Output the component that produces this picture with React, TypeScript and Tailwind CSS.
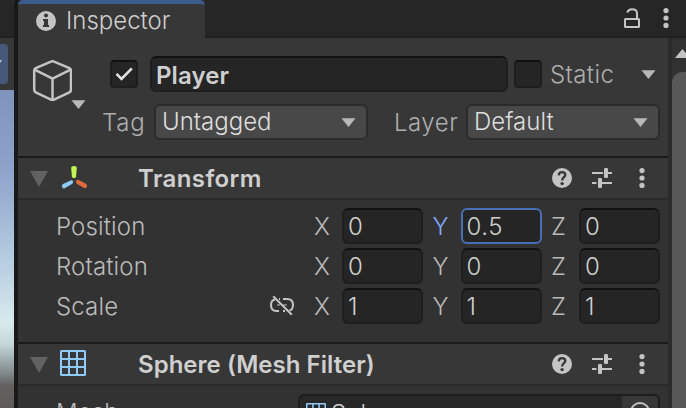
import { ReactNode } from "react";

function Caret({ className = "" }: { className?: string }) {
  return (
    <svg className={`h-[9px] w-[15px] shrink-0 ${className}`} viewBox="0 0 15 9" fill="#b8b8b8">
      <path d="M0.5 0.2H14.5L7.5 9Z" />
    </svg>
  );
}

function Kebab() {
  return (
    <svg className="h-5 w-[6px] shrink-0" viewBox="0 0 6 20" fill="#c4c4c4">
      <circle cx="3" cy="2.6" r="2.6" />
      <circle cx="3" cy="10" r="2.6" />
      <circle cx="3" cy="17.4" r="2.6" />
    </svg>
  );
}

function GridIcon({ className = "" }: { className?: string }) {
  return (
    <svg className={`shrink-0 ${className}`} viewBox="0 0 26 26" fill="none" stroke="#8fcbfa" strokeWidth="2">
      <rect x="1" y="1" width="24" height="24" rx="0.6" />
      <path d="M9 1V25M17 1V25M1 9H25M1 17H25" />
    </svg>
  );
}

function AxesIcon() {
  return (
    <svg className="h-[24px] w-[28px] shrink-0" viewBox="0 0 28 24">
      <path d="M11.2 2Q11.2 0 14 0Q16.8 0 16.8 2L16.1 10.5Q15.8 12.2 14 12.2Q12.2 12.2 11.9 10.5Z" fill="#c0f750" />
      <path d="M11.2 14.3Q12.6 14 13 15.5Q13.2 17 12 18L5.2 22.1Q3.3 23 2.2 21.2Q1.2 19 3 18Z" fill="#8fcbfa" />
      <path d="M17.5 13.8Q16 14.4 16 16Q16.1 17.2 17.2 17.9L24 22Q26 22.8 26.8 21Q27.6 18.8 26 17.8L18.7 14Z" fill="#e06a3a" />
    </svg>
  );
}

function Separator({ className }: { className: string }) {
  return <div className={`h-[2px] shrink-0 ${className}`} />;
}

function ComponentHeader({ icon, title, spacing }: { icon: ReactNode; title: string; spacing: string }) {
  return (
    <div className="flex h-10 shrink-0 items-center bg-[#373737] pr-[23px] pl-3">
      <svg className="mt-[2px] h-4 w-[18px] shrink-0" viewBox="0 0 18 16" fill="#626262">
        <path d="M0 0H18L9 16Z" />
      </svg>
      <div className="ml-3 flex w-[78px] justify-start">{icon}</div>
      <div className={`flex-1 pt-[2px] text-[24px] leading-6 font-semibold text-[#cfcfcf] ${spacing}`}>{title}</div>
      <svg className="h-5 w-5" viewBox="0 0 20 20">
        <circle cx="10" cy="10" r="10" fill="#c4c4c4" />
        <path d="M6.7 7.4C6.9 5.2 8.1 4.2 10 4.2C12 4.2 13.3 5.3 13.3 7C13.3 9.2 10.1 9.3 10.1 12.5" fill="none" stroke="#373737" strokeWidth="2.3" />
        <circle cx="10.1" cy="15.6" r="1.7" fill="#373737" />
      </svg>
      <svg className="mr-[27px] ml-5 h-5 w-5" viewBox="0 0 20 20" fill="#c4c4c4">
        <path d="M0 4H11V6H0ZM16 4H20V6H16ZM0 14H4.5V16H0ZM10 14H20V16H10Z" />
        <rect x="12" y="0" width="4" height="10" rx="1.2" />
        <rect x="6" y="10" width="4" height="10" rx="1.2" />
      </svg>
      <Kebab />
    </div>
  );
}

function Field({ axis, value, active = false }: { axis: string; value: string; active?: boolean }) {
  return (
    <div className="flex items-center">
      <span className={`w-[28px] pt-[2px] ${active ? "text-[#86aaff]" : "text-[#bababa]"}`}>{axis}</span>
      <div
        className={`flex h-9 w-[81px] items-center rounded-[6px] border-2 bg-[#252525] pt-[2px] pl-[4px] tracking-[0.5px] text-[#d0d0d0] ${
          active ? "border-[#4770b5]" : "border-[#1e1e1e] border-t-[#111111]"
        }`}
      >
        {value}
      </div>
    </div>
  );
}

function VectorRow({ label, values, active, link }: { label: string; values: string[]; active?: number; link?: boolean }) {
  return (
    <div className="flex h-9 items-center">
      <span className="w-[213px] pt-[2px] tracking-[0.15px] text-[#bababa]">{label}</span>
      <div className="w-[45px]">
        {link && (
          <svg className="h-5 w-[26px]" viewBox="0 0 26 20" fill="none" stroke="#c4c4c4" strokeWidth="2">
            <path d="M6 3.4C2.6 4 2 6 2 9C2 12.8 3.8 15 7.4 15H10M10 3H11M14 3H18C22 3 24 5 24 9C24 12 23 13.8 20.5 14.6M14 15H16" />
            <path d="M8 9H11M14 9H18" opacity="0.5" />
            <path d="M4.2 0.2L22.8 18.7" />
          </svg>
        )}
      </div>
      <div className="flex gap-[9.5px]">
        {["X", "Y", "Z"].map((axis, i) => (
          <Field key={axis} axis={axis} value={values[i]} active={active === i} />
        ))}
      </div>
    </div>
  );
}

function Select({ value, className }: { value: string; className: string }) {
  return (
    <div className={`flex h-9 items-center justify-between rounded-[6px] border-2 border-[#2b2b2b] bg-[#484848] pr-[10px] pl-[6px] text-[#dedede] ${className}`}>
      <span>{value}</span>
      <Caret />
    </div>
  );
}

function ObjectHeader() {
  return (
    <div className="flex h-[118px] shrink-0 bg-[#373737] pt-[18px] pl-[14px]">
      <div className="flex w-[54px] pt-[4px]">
        <svg className="h-[41px] w-10 shrink-0" viewBox="0 0 40 41" fill="none" stroke="#c4c4c4" strokeWidth="2.5" strokeLinejoin="round">
          <path d="M19 1.6Q20.5 0.8 22 1.6L37.4 8.2Q39 9 39 10.8V29.5Q39 31.5 37.4 32.4L22 39.7Q20.5 40.4 19 39.7L3.7 32.4Q2.2 31.5 2.2 29.5V10.8Q2.2 9 3.7 8.2Z" />
          <path d="M2.6 9.7L20.5 18.7L38.6 9.7M20.5 18.7V40" />
        </svg>
        <Caret className="mt-[40px] -ml-[1px]" />
      </div>
      <div className="flex flex-1 flex-col gap-3">
        <div className="flex h-9 items-center pl-6">
          <div className="flex h-7 w-7 items-center justify-center rounded-[4px] border-2 border-[#1e1e1e] border-t-[#111111] bg-[#252525]">
            <svg className="h-[14px] w-[18px]" viewBox="0 0 18 14" fill="none" stroke="#e2e2e2" strokeWidth="2.6">
              <path d="M1.5 6.8L6.5 11.8L16.8 1.4" />
            </svg>
          </div>
          <div className="ml-3 flex h-9 w-[358px] items-center rounded-[6px] border-2 border-[#1e1e1e] border-t-[#111111] bg-[#252525] pt-[3px] pl-[4px] font-semibold tracking-[0.1px] text-[#cfcfcf]">
            Player
          </div>
          <div className="ml-[6px] h-7 w-7 rounded-[4px] border-2 border-[#1e1e1e] border-t-[#111111] bg-[#252525]" />
          <span className="ml-2 w-[91px] pt-[2px] tracking-[0.4px] text-[#aeaeae]">Static</span>
          <Caret />
        </div>
        <div className="flex h-9 items-center pl-[16px]">
          <span className="w-[52px] pt-[2px] tracking-[0.8px] text-[#aeaeae]">Tag</span>
          <Select value="Untagged" className="w-[214px]" />
          <span className="ml-[26px] w-[72px] pt-[2px] tracking-[0.5px] text-[#aeaeae]">Layer</span>
          <Select value="Default" className="w-[194px]" />
        </div>
      </div>
    </div>
  );
}

function SceneEdge() {
  return (
    <div className="flex w-[14px] shrink-0 flex-col bg-[#373737]">
      <div className="h-[38px] shrink-0 rounded-tr-[4px] border-b-2 border-[#202020] bg-[#262626]" />
      <div className="mt-[6px] mb-[6px] h-10 w-2 shrink-0 overflow-hidden rounded-r-[4px] bg-[#46597a]">
        <svg className="mt-[16px] h-[3px] w-[2px]" viewBox="0 0 2 3" fill="#c4c4c4"><path d="M0 0H2L0 3Z" /></svg>
      </div>
      <div className="flex-1 bg-[linear-gradient(180deg,#8093bd_0%,#8da3ca_25%,#bdd3e4_58%,#d8eaed_73%,#c4d6d8_80%,#818a8c_89%,#626060_93%,#605b59_100%)]" />
    </div>
  );
}

function TabBar() {
  return (
    <div className="flex h-[38px] shrink-0 bg-[#262626]">
      <div className="flex w-[187px] items-center overflow-hidden rounded-t-[5px] border-t-4 border-[#3a5b8e] bg-[#373737] pl-[18px]">
        <svg className="-mt-px h-5 w-5" viewBox="0 0 20 20">
          <circle cx="10" cy="10" r="10" fill="#c4c4c4" />
          <circle cx="10" cy="4.4" r="2" fill="#373737" />
          <path d="M7 8H12V14H13V16H7V14H8V10H7Z" fill="#373737" />
        </svg>
        <span className="ml-[10px] text-[#cecece]">Inspector</span>
      </div>
      <div className="flex flex-1 items-center justify-end border-b-2 border-[#202020] pr-[17px]">
        <svg className="mr-[23px] h-5 w-4" viewBox="0 0 16 20" fill="none" stroke="#c4c4c4" strokeWidth="2">
          <rect x="1" y="11" width="14" height="8" rx="0.5" />
          <path d="M3.2 4.5Q4.2 1.2 8 1.2Q13 1.2 13 5.5V11" />
        </svg>
        <Kebab />
      </div>
    </div>
  );
}

export default function App() {
  return (
    <div className="flex h-[408px] w-[686px] overflow-hidden bg-[#191919] font-[Inter,sans-serif] text-[24px] leading-6 font-[350] whitespace-nowrap">
      <SceneEdge />
      <div className="ml-1 flex w-[668px] shrink-0 flex-col">
        <TabBar />
        <div className="flex min-h-0 flex-1">
          <div className="flex w-[650px] shrink-0 flex-col overflow-hidden bg-[#323232]">
            <ObjectHeader />
            <Separator className="bg-[#1a1a1a]" />
            <ComponentHeader icon={<AxesIcon />} title="Transform" spacing="tracking-[0.4px]" />
            <Separator className="bg-[#2b2b2b]" />
            <div className="flex h-[142px] shrink-0 flex-col gap-1 pt-2 pl-[38px]">
              <VectorRow label="Position" values={["0", "0.5", "0"]} active={1} />
              <VectorRow label="Rotation" values={["0", "0", "0"]} />
              <VectorRow label="Scale" values={["1", "1", "1"]} link />
            </div>
            <Separator className="bg-[#1a1a1a]" />
            <ComponentHeader icon={<GridIcon className="-mt-[2px] h-[26px] w-[26px]" />} title="Sphere (Mesh Filter)" spacing="tracking-[0.03px]" />
            <Separator className="bg-[#2b2b2b]" />
            <div className="flex h-[54px] shrink-0 pt-2 pl-[38px]">
              <span className="w-[242px] pt-[7px] tracking-[0.15px] text-[#bababa]">Mesh</span>
              <div className="flex h-9 w-[362px] overflow-hidden rounded-[6px] border-2 border-[#1e1e1e] bg-[#272727]">
                <GridIcon className="mt-[7px] ml-[6px] h-5 w-5" />
                <span className="ml-[5px] flex-1 pt-[6px] text-[#cecece]">Sphere</span>
                <div className="flex w-9 justify-center bg-[#373737] pt-[6px]">
                  <svg className="h-5 w-5" viewBox="0 0 20 20" fill="none" stroke="#c4c4c4" strokeWidth="2">
                    <circle cx="10" cy="10" r="9" />
                    <circle cx="10" cy="10" r="3" fill="#c4c4c4" />
                  </svg>
                </div>
              </div>
            </div>
          </div>
          <div className="flex w-[18px] shrink-0 flex-col overflow-hidden border-l-4 border-[#2b2b2b] bg-[#313131]">
            <svg className="mt-[11px] ml-[3px] h-[9px] w-[15px] shrink-0" viewBox="0 0 15 9" fill="#c4c4c4"><path d="M0 9H15L7.5 0Z" /></svg>
            <div className="mt-[14px] w-5 flex-1 rounded-tl-[10px] bg-[#585858]" />
          </div>
        </div>
      </div>
    </div>
  );
}
